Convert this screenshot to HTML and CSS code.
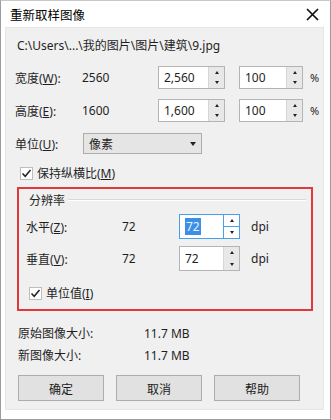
FILE: index.html
```html
<!DOCTYPE html>
<html lang="zh-CN">
  <head>
    <meta charset="UTF-8" />
    <meta name="viewport" content="width=device-width, initial-scale=1.0" />
    <link rel="stylesheet" href="styles.css">
    <title>重新取样图像</title>
  </head>
  <body>
    <div class="window">
      <div class="titlebar">
        <span class="title">重新取样图像</span>
        <svg class="close" width="13" height="13" viewBox="0 0 13 13">
          <path d="M1 1 L12 12 M12 1 L1 12" stroke="#111" stroke-width="1.7" />
        </svg>
      </div>

      <div class="panel">
        <div class="path">C:\Users\...\我的图片\图片\建筑\9.jpg</div>

        <div class="row size-row">
          <span class="lbl">宽度(<u>W</u>):</span>
          <span class="val">2560</span>
          <div class="spin w-spin">
            <span class="spin-text">2,560</span>
            <div class="spin-btns">
              <span class="up"></span>
              <span class="down"></span>
            </div>
          </div>
          <div class="spin pct-spin">
            <span class="spin-text">100</span>
            <div class="spin-btns">
              <span class="up"></span>
              <span class="down"></span>
            </div>
          </div>
          <span class="unit">%</span>
        </div>

        <div class="row size-row row2">
          <span class="lbl">高度(<u>E</u>):</span>
          <span class="val">1600</span>
          <div class="spin w-spin">
            <span class="spin-text">1,600</span>
            <div class="spin-btns">
              <span class="up"></span>
              <span class="down"></span>
            </div>
          </div>
          <div class="spin pct-spin">
            <span class="spin-text">100</span>
            <div class="spin-btns">
              <span class="up"></span>
              <span class="down"></span>
            </div>
          </div>
          <span class="unit">%</span>
        </div>

        <div class="row unit-row">
          <span class="lbl">单位(<u>U</u>):</span>
          <div class="select">
            <span>像素</span>
            <span class="caret"></span>
          </div>
        </div>

        <div class="check-row keep">
          <span class="check">
            <svg width="11" height="11" viewBox="0 0 11 11">
              <path d="M1.5 5.5 L4.2 8.3 L9.5 2" fill="none" stroke="#222" stroke-width="1.5" />
            </svg>
          </span>
          <span>保持纵横比(<u>M</u>)</span>
        </div>

        <div class="highlight">
          <div class="group-head">
            <span class="group-title">分辨率</span>
            <span class="group-line"></span>
          </div>

          <div class="row res-row">
            <span class="res-lbl">水平(<u>Z</u>):</span>
            <span class="res-val">72</span>
            <div class="spin dpi-spin focused">
              <span class="spin-text"><span class="sel">72</span></span>
              <div class="spin-btns">
                <span class="up"></span>
                <span class="down"></span>
              </div>
            </div>
            <span class="dpi">dpi</span>
          </div>

          <div class="row res-row second">
            <span class="res-lbl">垂直(<u>V</u>):</span>
            <span class="res-val">72</span>
            <div class="spin dpi-spin">
              <span class="spin-text">72</span>
              <div class="spin-btns">
                <span class="up"></span>
                <span class="down"></span>
              </div>
            </div>
            <span class="dpi">dpi</span>
          </div>

          <div class="check-row unit-check">
            <span class="check">
              <svg width="11" height="11" viewBox="0 0 11 11">
                <path d="M1.5 5.5 L4.2 8.3 L9.5 2" fill="none" stroke="#222" stroke-width="1.5" />
              </svg>
            </span>
            <span>单位值(<u>I</u>)</span>
          </div>
        </div>

        <div class="info first">
          <span class="info-lbl">原始图像大小:</span>
          <span>11.7 MB</span>
        </div>
        <div class="info">
          <span class="info-lbl">新图像大小:</span>
          <span>11.7 MB</span>
        </div>

        <div class="buttons">
          <button class="btn">确定</button>
          <button class="btn">取消</button>
          <button class="btn">帮助</button>
        </div>
      </div>
    </div>
  </body>
</html>
```

FILE: styles.css
```css
body {
  margin: 0;
  font-family: "Noto Sans", "Noto Sans CJK SC", sans-serif;
  font-size: 12px;
  color: #1f1f1f;
}
.window {
  width: 331px;
  height: 420px;
  box-sizing: border-box;
  border: 1px solid #9c9c9c;
  border-top-color: #c8c8c8;
  background: #fff;
}
.titlebar {
  height: 26px;
  display: flex;
  align-items: center;
  justify-content: space-between;
  padding: 0 11px 0 9px;
}
.title {
  font-family: "Noto Sans CJK SC", sans-serif;
  font-size: 12.5px;
  color: #000;
}
.panel {
  margin: 0 6px 0 4px;
  height: 383px;
  box-sizing: border-box;
  background: #f0f0f0;
  border: 1px solid #e6e6e6;
  padding: 6px 0 0 9px;
}
.path {
  height: 24px;
  line-height: 24px;
  padding-left: 2px;
}
u {
  text-decoration: underline;
  text-underline-offset: 1px;
}

.row {
  display: flex;
  align-items: center;
}
.size-row {
  height: 23px;
  margin-top: 8px;
}
.size-row.row2 {
  margin-top: 10px;
}
.lbl {
  width: 67px;
}
.val {
  width: 76px;
}

.spin {
  display: flex;
  height: 23px;
  box-sizing: border-box;
  border: 1px solid #b4b4b4;
  background: #fff;
}
.spin-text {
  flex: 1;
  display: flex;
  align-items: center;
  padding-left: 5px;
}
.spin-btns {
  width: 15px;
  display: flex;
  flex-direction: column;
  background: #e8e8e8;
  border-left: 1px solid #d6d6d6;
}
.spin-btns span {
  flex: 1;
  display: flex;
  align-items: center;
  justify-content: center;
}
.spin-btns .up::before {
  content: "";
  border-left: 2.5px solid transparent;
  border-right: 2.5px solid transparent;
  border-bottom: 3px solid #222;
}
.spin-btns .down::before {
  content: "";
  border-left: 2.5px solid transparent;
  border-right: 2.5px solid transparent;
  border-top: 3px solid #222;
}
.w-spin {
  width: 67px;
}
.pct-spin {
  width: 64px;
  margin-left: 14px;
}
.unit {
  margin-left: 7px;
  font-size: 11px;
}

.unit-row {
  height: 21px;
  margin-top: 11px;
}
.unit-row .lbl {
  width: 68px;
}
.select {
  width: 119px;
  height: 21px;
  box-sizing: border-box;
  border: 1px solid #adadad;
  background: #e5e5e5;
  display: flex;
  align-items: center;
  justify-content: space-between;
  padding: 0 5px 0 5px;
}
.caret {
  border-left: 3.5px solid transparent;
  border-right: 3.5px solid transparent;
  border-top: 4px solid #222;
}

.check-row {
  display: flex;
  align-items: center;
  gap: 4px;
  height: 16px;
}
.check {
  width: 13px;
  height: 13px;
  box-sizing: border-box;
  border: 1px solid #bdbdbd;
  background: #fff;
  display: flex;
  align-items: center;
  justify-content: center;
}
.keep {
  margin-top: 11px;
  padding-left: 5px;
}

.highlight {
  margin: 6px 0 0 2px;
  width: 296px;
  height: 124px;
  box-sizing: border-box;
  border: 2.5px solid #e0393c;
  padding: 3px 0 0 7px;
}
.group-head {
  display: flex;
  align-items: center;
  height: 16px;
  padding-right: 5px;
}
.group-title {
  padding: 0 3px 0 3px;
}
.group-line {
  flex: 1;
  height: 0;
  border-top: 1px solid #d9d9d9;
  border-bottom: 1px solid #fff;
}
.res-row {
  height: 25px;
  margin-top: 6px;
}
.res-row.second {
  margin-top: 7px;
}
.res-lbl {
  width: 96px;
}
.res-val {
  width: 57px;
}
.dpi-spin {
  width: 61px;
  height: 25px;
}
.dpi {
  margin-left: 11px;
}
.focused {
  border-color: #4aa0e8;
}
.focused .spin-btns {
  background: #fff;
  border-left-color: #4aa0e8;
}
.focused .spin-btns .up {
  border-bottom: 1px solid #4aa0e8;
}
.sel {
  background: #3d8fe6;
  color: #e8f2ff;
  padding: 0 1px;
}
.unit-check {
  margin-top: 14px;
  padding-left: 3px;
}

.info {
  display: flex;
  align-items: center;
  height: 16px;
  margin-top: 6px;
  padding-left: 3px;
}
.info.first {
  margin-top: 14px;
}
.info-lbl {
  width: 126px;
}

.buttons {
  display: flex;
  gap: 12px;
  margin-top: 12px;
  padding-left: 3px;
}
.btn {
  width: 86px;
  height: 26px;
  border: 1px solid #adadad;
  background: #e1e1e1;
  font-family: "Noto Sans CJK SC", sans-serif;
  font-size: 12px;
  color: #1a1a1a;
  padding: 0;
}
```
